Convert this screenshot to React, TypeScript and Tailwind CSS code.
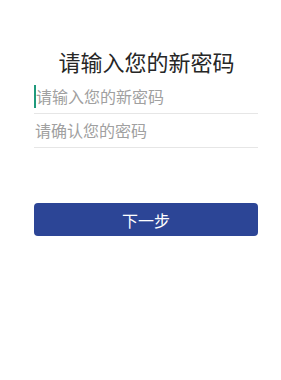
export default function App() {
  return (
    <div
      className="w-[281px] h-[380px] bg-white"
      style={{ fontFamily: '"Noto Sans CJK SC", "Noto Sans", sans-serif' }}
    >
      <div className="pt-[44px] h-[80px] text-center text-[22px] leading-[34px] text-[#262626] pl-[12px]">
        请输入您的新密码
      </div>
      <div className="ml-[34px] w-[224px]">
        <div className="relative">
          <input
            type="password"
            placeholder="请输入您的新密码"
            className="block w-full h-[34px] pl-[2px] pb-[2px] border-b border-[#e6e6e6] text-[16px] outline-none placeholder:text-[#a0a0a0]"
          />
          <div className="absolute left-0 top-[5px] w-[2px] h-[23px] bg-[#1f9a7c]" />
        </div>
        <input
          type="password"
          placeholder="请确认您的密码"
          className="block w-full h-[34px] pl-[1px] pb-[2px] border-b border-[#e6e6e6] text-[16px] outline-none placeholder:text-[#a0a0a0]"
        />
        <button className="mt-[55px] w-full h-[33px] rounded-[4px] bg-[#2c4596] text-white text-[16px]">
          下一步
        </button>
      </div>
    </div>
  );
}
